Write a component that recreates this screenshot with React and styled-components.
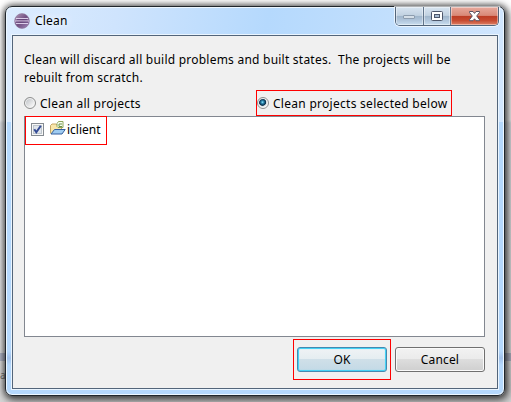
import React from 'react';
import styled, { createGlobalStyle, css } from 'styled-components';

const GlobalStyle = createGlobalStyle`
  * { box-sizing: border-box; }
  body { margin: 0; overflow: hidden; }
`;

const Desktop = styled.main`
  position: relative;
  width: 511px;
  height: 402px;
  padding: 6px 6px 6px 5px;
  overflow: hidden;
  background:
    linear-gradient(#b6bacb, #b6bacb) 0 353px / 100% 8px no-repeat,
    linear-gradient(#fff 0, #fff 120px, #e9ebef 123px, #e8e8e8 345px, #d6d6d6 100%);
  font: 12px/17px "Noto Sans", "Open Sans", sans-serif;
  color: #000;
`;

const BackgroundText = styled.span`
  position: absolute;
  left: 0;
  top: 367px;
  font-size: 10px;
  letter-spacing: -1px;
  color: #777;
`;

const Window = styled.section`
  position: relative;
  display: flex;
  flex-direction: column;
  width: 500px;
  height: 390px;
  padding: 0 5px 5px 6px;
  border: 1px solid #20262c;
  border-radius: 7px;
  background:
    linear-gradient(transparent, rgba(132,158,207,.4), transparent) 0 344px / 100% 14px no-repeat,
    linear-gradient(100deg, #dcecff 0, #cfe4fd 110px, #b5d9fd 260px, #c4e0fd 400px, #d3e7fe 100%) 0 0 / 100% 115px no-repeat,
    linear-gradient(#b5d8fc, #b5d8fc);
  box-shadow: inset 0 0 0 1px #edf7ff, 0 0 6px 1px rgba(0,0,0,.55), 2px 3px 8px 2px rgba(0,0,0,.5);
`;

const TitleBar = styled.header`
  display: flex;
  flex: 0 0 27px;
  padding-left: 2px;
`;

const Logo = styled.svg`
  width: 16px;
  height: 16px;
  margin: 6px 5px 0 0;
`;

const Title = styled.h1`
  flex: 1;
  margin: 4px 0 0;
  font-size: 12px;
  font-weight: 400;
  line-height: 19px;
  letter-spacing: .2px;
  text-shadow: 0 0 7px #fff, 0 0 10px #fff;
`;

const Controls = styled.div`
  display: flex;
  width: 104px;
  height: 19px;
  border: 1px solid #53657a;
  border-top: 0;
  border-radius: 0 0 5px 5px;
  overflow: hidden;
  box-shadow: 0 0 0 1px rgba(255,255,255,.65);
`;

const Control = styled.button`
  display: grid;
  place-items: center;
  width: ${p => p.$width}px;
  height: 18px;
  padding: 0;
  border: 0;
  border-left: ${p => p.$divider ? '1px solid #62758b' : '0'};
  background: ${p => p.$close
    ? 'linear-gradient(#e7aa9e 0, #d98977 47%, #bb3c24 50%, #c74b31 75%, #dd8066 100%)'
    : 'linear-gradient(#d8e5f1 0, #c1d1e1 47%, #9fb5ca 50%, #b1c6dc 75%, #c9deef 100%)'};
  box-shadow: inset 0 0 0 1px rgba(255,255,255,.42);
`;

const Client = styled.div`
  width: 486px;
  height: 354px;
  margin-top: 1px;
  padding: 15px 12px 0 11px;
  border: 1px solid #53657a;
  background: #f0f0f0;
  box-shadow: 0 0 0 1px #eaf5ff;
`;

const Message = styled.p`
  width: 461px;
  height: 36px;
  margin: 0;
  white-space: pre;
  line-height: 18px;
  letter-spacing: .23px;
`;

const Options = styled.div`
  display: grid;
  grid-template-columns: 233px 1fr;
  height: 29px;
  padding-top: 3px;
`;

const outline = css`
  &::after {
    content: '';
    position: absolute;
    inset: ${p => p.$inset};
    border: 1px solid #f00;
    pointer-events: none;
  }
`;

const Option = styled.div`
  position: relative;
  display: flex;
  height: 26px;
  width: ${p => p.$width}px;
  align-items: center;
  gap: 4px;
  ${p => p.$inset && outline}
`;

const Radio = styled.span`
  width: 12px;
  height: 12px;
  flex-shrink: 0;
  border: 1px solid #8e8f8f;
  border-radius: 50%;
  background: ${p => p.$checked
    ? 'radial-gradient(circle at 45% 42%, #92e5fb 0, #2b87ae 17%, #0c3453 37%, #173c54 41%, #d2d8db 49%, #fff 65%)'
    : 'linear-gradient(135deg, #b7bcc0, #eeeeef 70%, #fff)'};
  box-shadow: inset 0 0 0 1px #f4f4f4;
`;

const Label = styled.span`
  white-space: pre;
  letter-spacing: ${p => p.$spacing || 0}px;
`;

const ProjectList = styled.div`
  width: 461px;
  height: 221px;
  border: 1px solid #828790;
  background: #fff;
`;

const ProjectRow = styled.div`
  position: relative;
  display: flex;
  align-items: center;
  width: 83px;
  height: 24px;
  padding-left: 6px;
  ${outline}
`;

const Checkbox = styled.svg`
  width: 13px;
  height: 13px;
  margin-right: 5px;
`;

const Folder = styled.svg`
  width: 17px;
  height: 16px;
  margin-right: 1px;
`;

const Actions = styled.footer`
  display: flex;
  justify-content: flex-end;
  gap: 8px;
  padding-top: 10px;
`;

const Button = styled.button`
  position: relative;
  width: 90px;
  height: 25px;
  padding: 0;
  border: 1px solid ${p => p.$primary ? '#4589b0' : '#707070'};
  border-radius: 3px;
  background: ${p => p.$primary
    ? 'linear-gradient(#f0f3f5 0, #e5edf1 47%, #cfdfe8 50%, #c3d9e6)'
    : 'linear-gradient(#f2f2f2 0, #ebebeb 48%, #dddddd 50%, #cfcfcf)'};
  box-shadow: ${p => p.$primary
    ? 'inset 0 0 0 1px #46d2f5, inset 0 0 1px 1px #88dcf3'
    : 'inset 0 0 0 1px #fafafa'};
  color: #000;
  font: inherit;
  line-height: 21px;
  letter-spacing: .15px;
  ${p => p.$inset && outline}
`;

function EclipseLogo() {
  return (
    <Logo viewBox="0 0 16 16" aria-hidden="true">
      <defs>
        <linearGradient id="sphere" x2="1" y2="1">
          <stop stopColor="#b49abb" /><stop offset=".5" stopColor="#725082" /><stop offset="1" stopColor="#a38abd" />
        </linearGradient>
      </defs>
      <circle cx="8" cy="8" r="7.4" fill="url(#sphere)" stroke="#8e779b" strokeWidth=".6" />
      <path d="M2 5.5h12M1 8h14M2 10.5h12" stroke="#e5d8f2" strokeWidth=".9" />
      <path d="M3 6.5h10M2 9.1h12" stroke="#5d3f74" strokeWidth=".7" />
    </Logo>
  );
}

export default function App() {
  return (
    <>
      <GlobalStyle />
      <Desktop>
        <BackgroundText>ar</BackgroundText>
        <Window>
          <TitleBar>
            <EclipseLogo />
            <Title>Clean</Title>
            <Controls>
              <Control $width={27} aria-label="Minimize">
                <svg width="13" height="6" viewBox="0 0 13 6">
                  <rect x=".5" y="2.5" width="11" height="3" rx=".5" fill="#d5dfe8" stroke="#8d9daf" />
                </svg>
              </Control>
              <Control $width={28} $divider aria-label="Maximize">
                <svg width="12" height="11" viewBox="0 0 12 11">
                  <rect x=".5" y=".5" width="11" height="9" rx="1" fill="#fff" stroke="#4e576b" />
                  <rect x="3.5" y="3.5" width="5" height="3" fill="#a6bad0" stroke="#4e576b" />
                </svg>
              </Control>
              <Control $width={48} $divider $close aria-label="Close">
                <svg width="13" height="11" viewBox="0 0 13 11">
                  <path d="M1.5.5H5L6.5 2.4 8 .5h3.5v1L8.7 5l2.8 3.7v1H8L6.5 7.8 5 9.7H1.5v-1L4.3 5 1.5 1.5Z" fill="#fff" stroke="#585263" />
                </svg>
              </Control>
            </Controls>
          </TitleBar>
          <Client>
            <Message>{'Clean will discard all build problems and built states.  The projects will be\nrebuilt from scratch.'}</Message>
            <Options>
              <Option $width={150}><Radio /><Label $spacing={0.28}>Clean all projects</Label></Option>
              <Option $width={195} $inset="0 0 0 -1px"><Radio $checked /><Label $spacing={0.28}>Clean projects selected below</Label></Option>
            </Options>
            <ProjectList>
              <ProjectRow $inset="-1px 1px -4px 0">
                <Checkbox viewBox="0 0 13 13">
                  <rect x=".5" y=".5" width="12" height="12" fill="#f7f7f7" stroke="#858b91" />
                  <rect x="2.5" y="2.5" width="8" height="8" fill="#e0e5eb" stroke="#bdc5cc" />
                  <path d="m3.3 6.3 2 3L9.8 2.7" fill="none" stroke="#344b95" strokeWidth="2" />
                </Checkbox>
                <Folder viewBox="0 0 17 16">
                  <path d="M1.5 12.5V4.5L3 3h4L8.5 4.5h4v4" fill="#f9e6aa" stroke="#c7a864" />
                  <path d="m2 13 3.5-4.5h10.7L13 13Z" fill="#9fcbf0" stroke="#355f9d" />
                  <path d="M9.5.5H14v6H9l-1-1v-3Z" fill="#f7fff2" stroke="#8fa65c" />
                  <path d="M13 3h-3v2.5h3" fill="none" stroke="#6f914b" />
                </Folder>
                <Label>iclient</Label>
              </ProjectRow>
            </ProjectList>
            <Actions>
              <Button $primary $inset="-9px -5px">OK</Button>
              <Button>Cancel</Button>
            </Actions>
          </Client>
        </Window>
      </Desktop>
    </>
  );
}
